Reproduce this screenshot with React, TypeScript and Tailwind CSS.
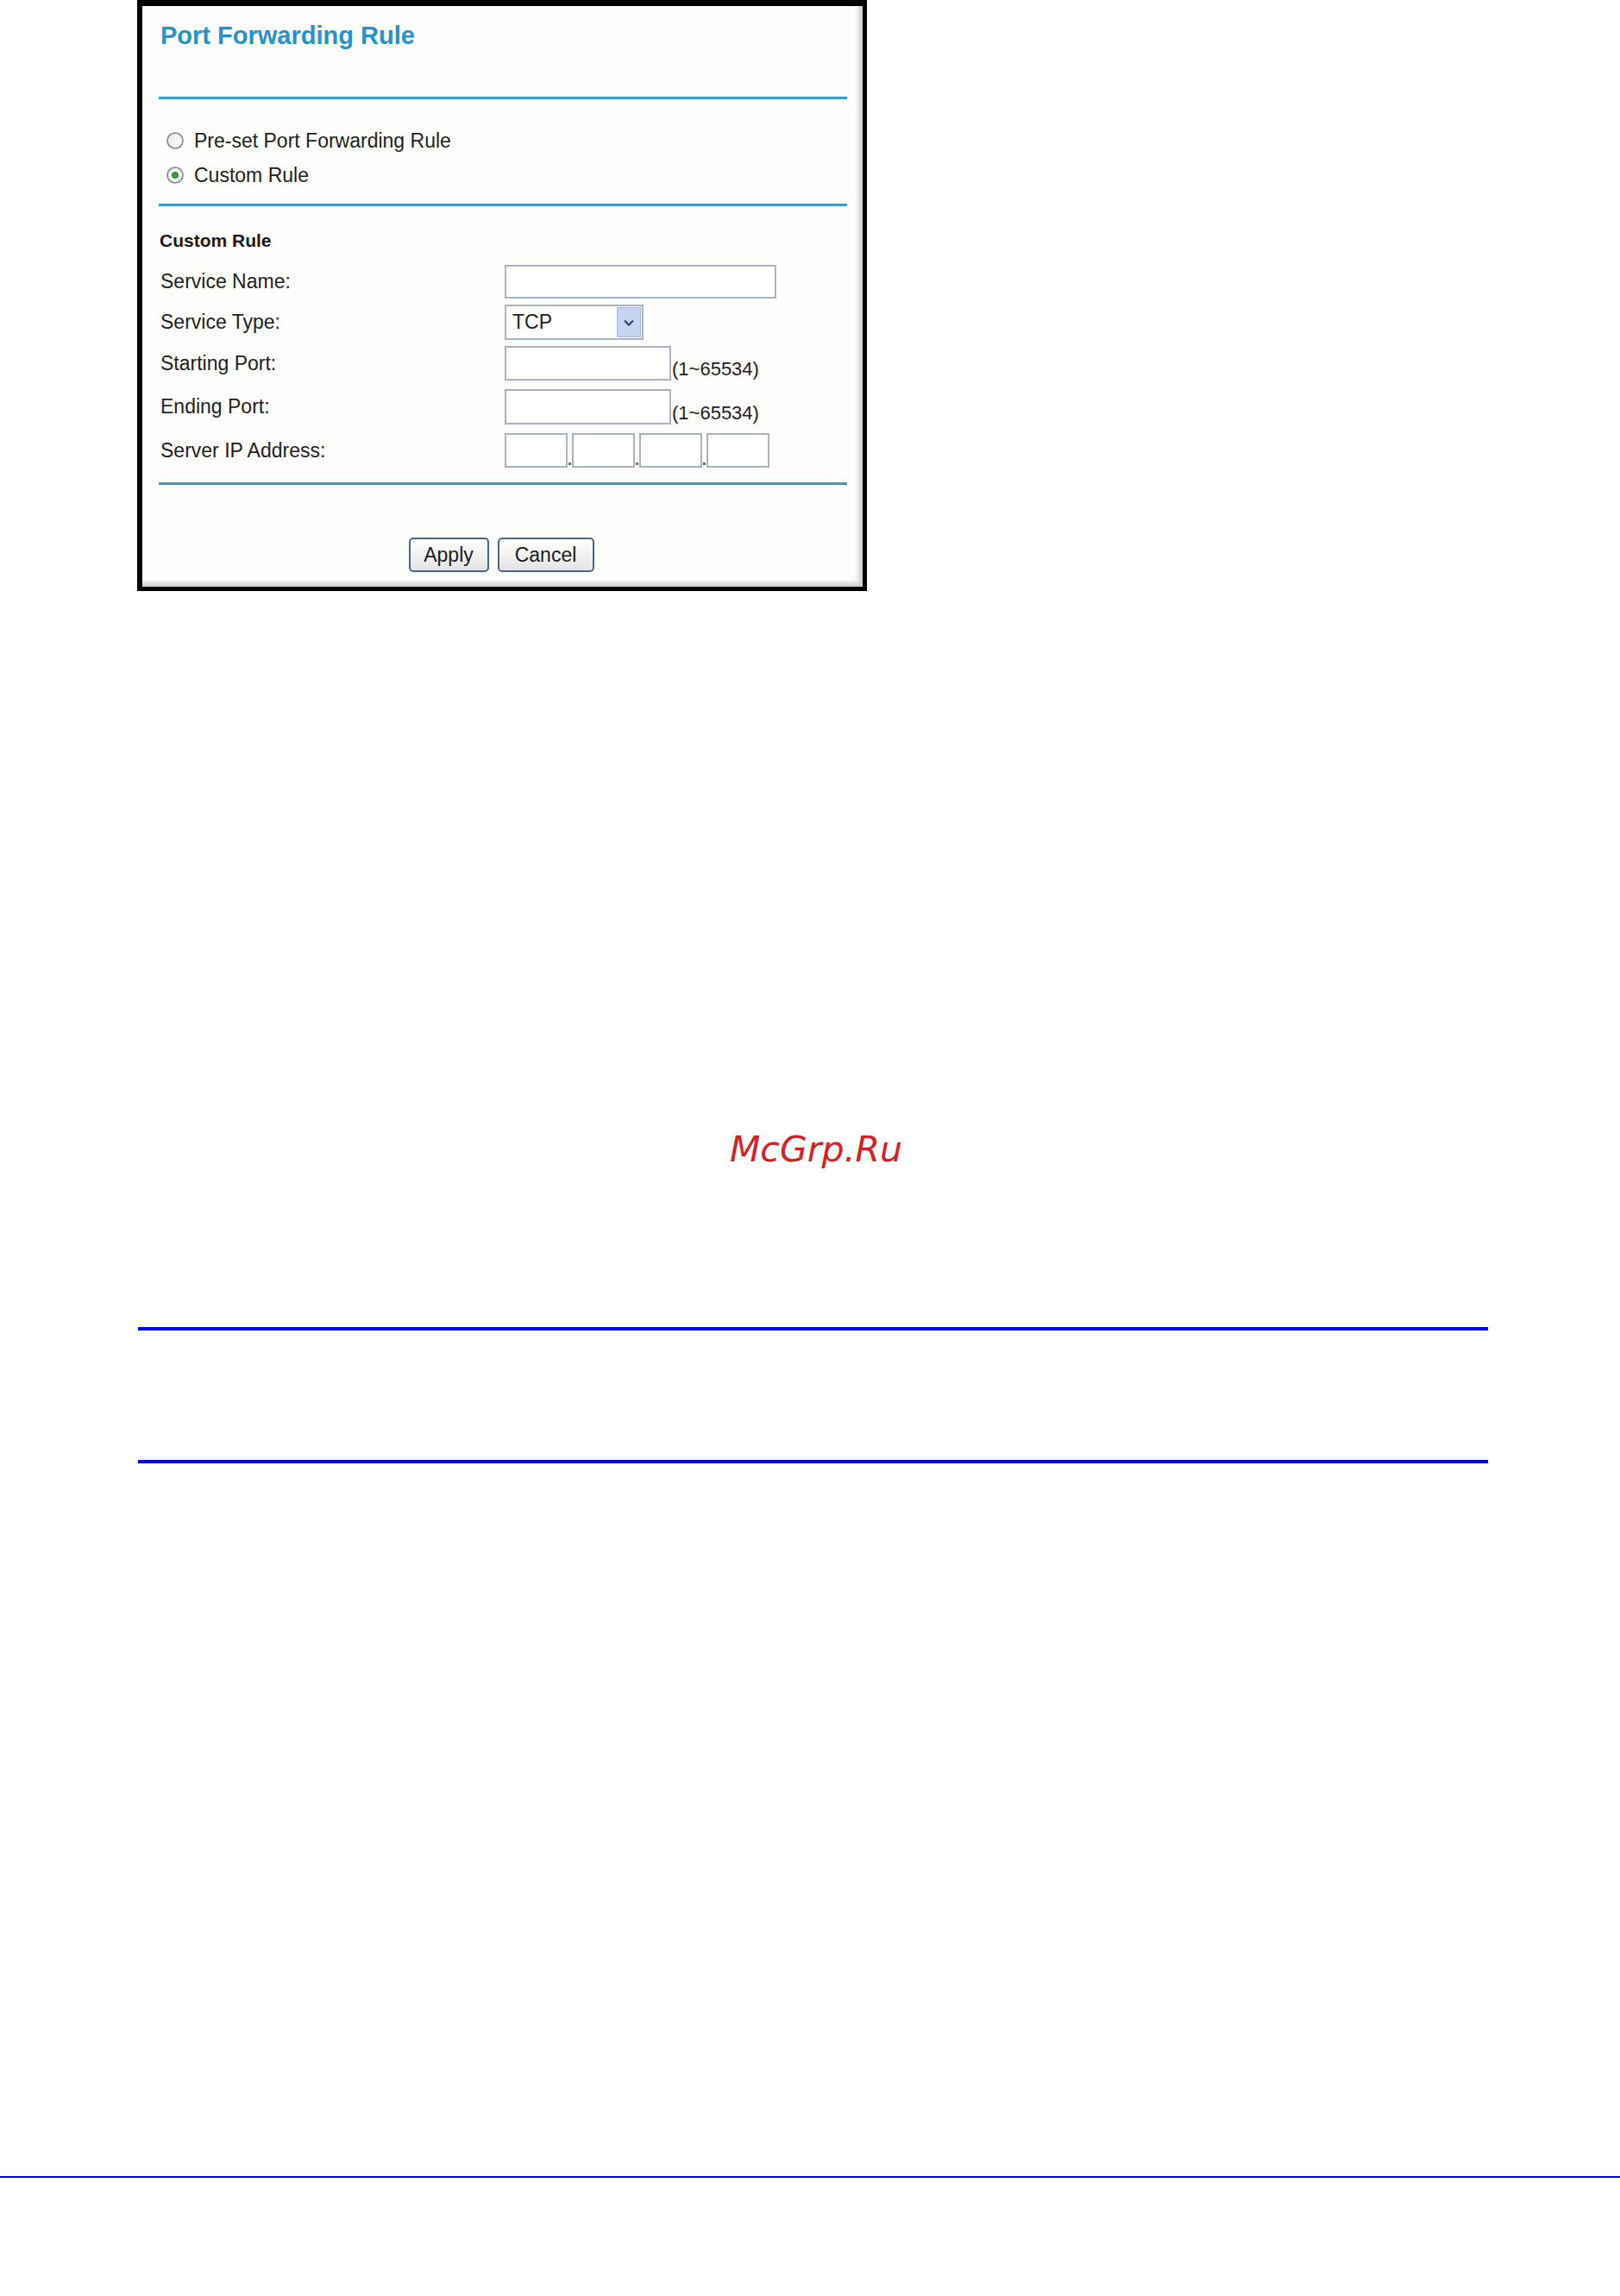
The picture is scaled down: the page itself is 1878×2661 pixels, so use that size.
import React from "react";

const font = { fontFamily: '"Liberation Sans", Arial, sans-serif' };

const Radio = ({ checked }: { checked?: boolean }) => (
  <svg width="22" height="22" viewBox="0 0 22 22">
    <defs>
      <linearGradient id={checked ? "rg1" : "rg0"} x1="0" y1="0" x2="1" y2="1">
        <stop offset="0" stopColor="#e4e6e9" />
        <stop offset="1" stopColor="#ffffff" />
      </linearGradient>
    </defs>
    <circle cx="11" cy="11" r="9" fill={`url(#${checked ? "rg1" : "rg0"})`} stroke="#7d8793" strokeWidth="1.6" />
    {checked && (
      <circle cx="11" cy="11" r="3.6" fill="#3f9e3a" stroke="#2d5a2c" strokeWidth="0.8" />
    )}
  </svg>
);

const Field = ({ w }: { w: string }) => (
  <div className={`${w} h-full border-2 border-[#aab3c0] bg-white`} />
);

const Row = ({
  label,
  h,
  mt,
  children,
}: {
  label: string;
  h: string;
  mt: string;
  children: React.ReactNode;
}) => (
  <div className={`flex items-center ${h} ${mt}`}>
    <div className="w-[401px] pl-[2px] text-[23px] text-[#1f1f1f]">{label}</div>
    <div className="flex h-full items-end">{children}</div>
  </div>
);

const Range = () => (
  <span className="ml-[1px] mb-[-1px] text-[22px] leading-[28px] text-[#1f1f1f]">(1~65534)</span>
);

const Btn = ({ children, w }: { children: React.ReactNode; w: string }) => (
  <button
    className={`${w} h-[40px] rounded-[5px] border-2 border-[#4b6686] bg-gradient-to-b from-white to-[#e4e4e4] text-[23px] text-[#1c1c1c]`}
  >
    {children}
  </button>
);

const PortForwardingPanel = () => (
  <div
    className="ml-[159px] h-[685px] w-[846px] border-black border-t-[7px] border-l-[6px] border-r-[5px] border-b-[5px] bg-[#fdfdfc] shadow-[inset_-5px_-5px_5px_rgba(0,0,0,0.18)]"
    style={font}
  >
    <div className="flex flex-col pl-[19px] pr-[18px]">
      <h1 className="mt-[17px] pl-[2px] text-[29px] font-bold leading-[34px] text-[#2893c6]">
        Port Forwarding Rule
      </h1>
      <div className="mt-[54px] h-[3px] bg-[#3d9dc4]" />

      <div className="mt-[30px] flex h-[36px] items-center gap-[11px] pl-[8px] text-[23px] text-[#1f1f1f]">
        <Radio />
        <span>Pre-set Port Forwarding Rule</span>
      </div>
      <div className="mt-[4px] flex h-[36px] items-center gap-[11px] pl-[8px] text-[23px] text-[#1f1f1f]">
        <Radio checked />
        <span>Custom Rule</span>
      </div>
      <div className="mt-[15px] h-[3px] bg-[#3d9dc4]" />

      <div className="mt-[25px] flex h-[30px] items-center pl-[1px] text-[21px] font-bold text-[#1a1a1a]">
        Custom Rule
      </div>

      <Row label="Service Name:" h="h-[39px]" mt="mt-[13px]">
        <Field w="w-[315px]" />
      </Row>
      <Row label="Service Type:" h="h-[41px]" mt="mt-[7px]">
        <div className="flex h-full w-[161px] items-stretch border-2 border-[#aab3c0] bg-white">
          <div className="flex flex-1 items-center pl-[7px] text-[23px] text-[#1f1f1f]">TCP</div>
          <div className="my-[1px] mr-[1px] flex w-[28px] items-center justify-center border border-[#a9b9dc] bg-[#c6d4f2]">
            <svg width="14" height="10" viewBox="0 0 14 10">
              <path d="M2 2.5 L7 7.5 L12 2.5" fill="none" stroke="#3b4c78" strokeWidth="2.4" />
            </svg>
          </div>
        </div>
      </Row>
      <Row label="Starting Port:" h="h-[40px]" mt="mt-[7px]">
        <Field w="w-[193px]" />
        <Range />
      </Row>
      <Row label="Ending Port:" h="h-[41px]" mt="mt-[10px]">
        <Field w="w-[193px]" />
        <Range />
      </Row>
      <Row label="Server IP Address:" h="h-[40px]" mt="mt-[10px]">
        {[0, 1, 2, 3].map((i) => (
          <React.Fragment key={i}>
            {i > 0 && (
              <div className="flex w-[5px] items-end justify-center pb-[3px]">
                <div className="h-[3px] w-[3px] bg-[#6f6f6f]" />
              </div>
            )}
            <Field w="w-[73px]" />
          </React.Fragment>
        ))}
      </Row>
      <div className="mt-[17px] h-[3px] bg-[#3d9dc4]" />

      <div className="mt-[61px] flex justify-center gap-[10px] pr-[4px]">
        <Btn w="w-[93px]">Apply</Btn>
        <Btn w="w-[112px]">Cancel</Btn>
      </div>
    </div>
  </div>
);

export default function App() {
  return (
    <div className="flex h-[2661px] w-[1878px] flex-col bg-white">
      <PortForwardingPanel />

      <div
        className="mt-[623px] h-[48px] pl-[846px] text-[41px] italic leading-[48px] text-[#d42027]"
        style={{ fontFamily: '"DejaVu Sans", sans-serif' }}
      >
        McGrp.Ru
      </div>

      <div className="ml-[160px] mt-[182px] h-[4px] w-[1565px] bg-[#0000ff]" />
      <div className="ml-[160px] mt-[150px] h-[4px] w-[1565px] bg-[#0000ff]" />
      <div className="mt-[826px] h-[2px] w-full bg-[#0000ff]" />
    </div>
  );
}
